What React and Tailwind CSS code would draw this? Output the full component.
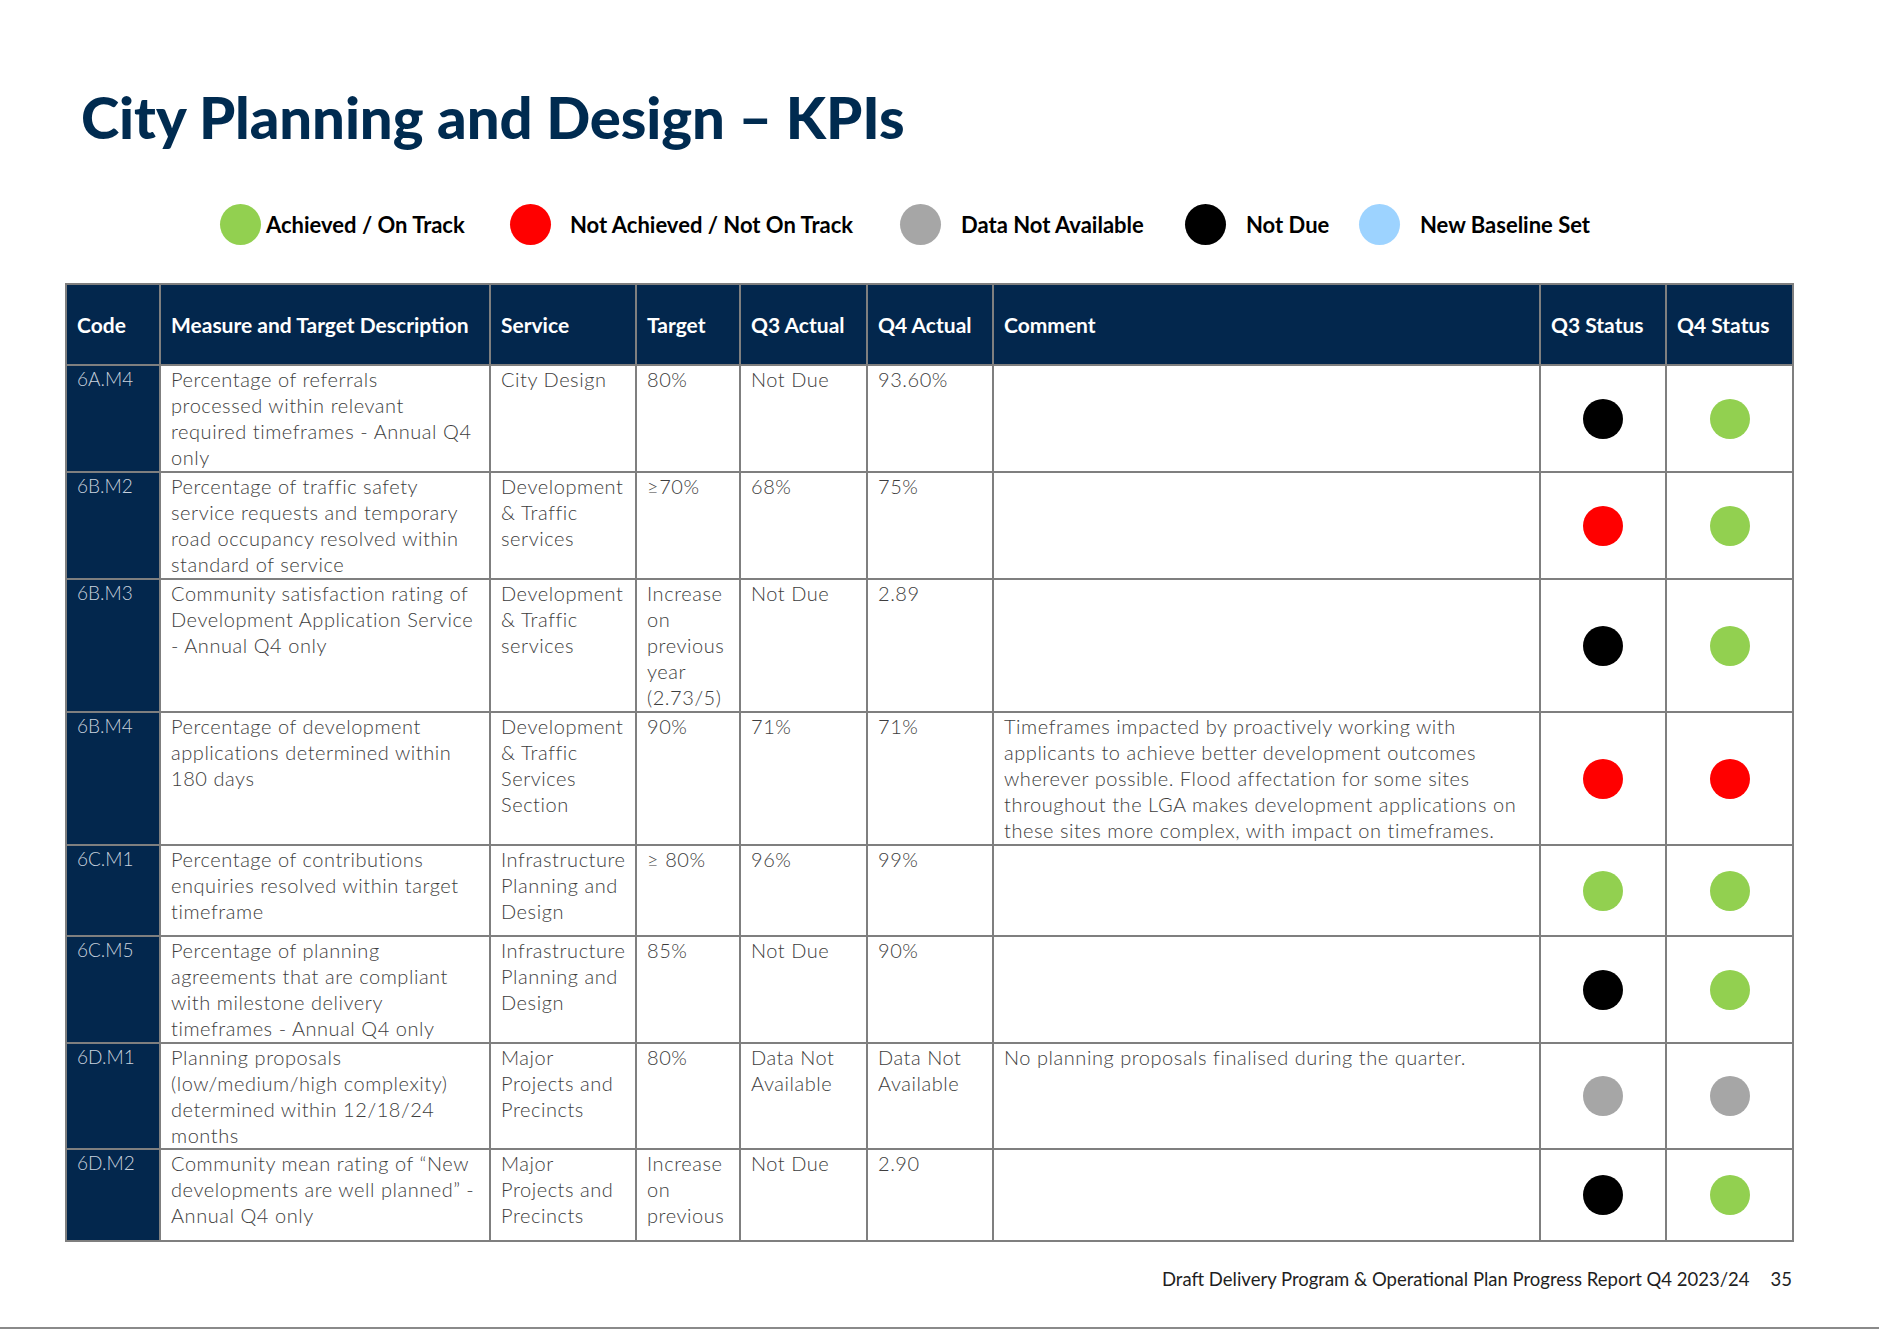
import React from 'react';

const STATUS = {
  green: 'bg-[#92d050]',
  red: 'bg-[#ff0000]',
  grey: 'bg-[#a6a6a6]',
  black: 'bg-black',
  blue: 'bg-[#9dd3ff]',
};

const LEGEND = [
  { color: 'green', label: 'Achieved / On Track', w: 'w-[290px]', gap: 'gap-[5px]' },
  { color: 'red', label: 'Not Achieved / Not On Track', w: 'w-[390px]', gap: 'gap-[19px]' },
  { color: 'grey', label: 'Data Not Available', w: 'w-[285px]', gap: 'gap-[20px]' },
  { color: 'black', label: 'Not Due', w: 'w-[174px]', gap: 'gap-[20px]' },
  { color: 'blue', label: 'New Baseline Set', w: 'w-auto', gap: 'gap-[20px]' },
];

const HEADERS = ['Code', 'Measure and Target Description', 'Service', 'Target', 'Q3 Actual', 'Q4 Actual', 'Comment', 'Q3 Status', 'Q4 Status'];
const WIDTHS = ['w-[94px]', 'w-[330px]', 'w-[146px]', 'w-[104px]', 'w-[127px]', 'w-[126px]', 'w-[547px]', 'w-[126px]', 'w-[127px]'];

// lines are kept as in the report so the wrapping matches
const ROWS = [
  {
    h: 'h-[107px]',
    code: '6A.M4',
    measure: ['Percentage of referrals', 'processed within relevant', 'required timeframes - Annual Q4', 'only'],
    service: ['City Design'],
    target: ['80%'],
    q3: ['Not Due'],
    q4: ['93.60%'],
    comment: [],
    s3: 'black',
    s4: 'green',
  },
  {
    h: 'h-[107px]',
    code: '6B.M2',
    measure: ['Percentage of traffic safety', 'service requests and temporary', 'road occupancy resolved within', 'standard of service'],
    service: ['Development', '& Traffic', 'services'],
    target: ['≥70%'],
    q3: ['68%'],
    q4: ['75%'],
    comment: [],
    s3: 'red',
    s4: 'green',
  },
  {
    h: 'h-[133px]',
    code: '6B.M3',
    measure: ['Community satisfaction rating of', 'Development Application Service', '- Annual Q4 only'],
    service: ['Development', '& Traffic', 'services'],
    target: ['Increase', 'on', 'previous', 'year', '(2.73/5)'],
    q3: ['Not Due'],
    q4: ['2.89'],
    comment: [],
    s3: 'black',
    s4: 'green',
  },
  {
    h: 'h-[133px]',
    code: '6B.M4',
    measure: ['Percentage of development', 'applications determined within', '180 days'],
    service: ['Development', '& Traffic', 'Services', 'Section'],
    target: ['90%'],
    q3: ['71%'],
    q4: ['71%'],
    comment: [
      'Timeframes impacted by proactively working with',
      'applicants to achieve better development outcomes',
      'wherever possible. Flood affectation for some sites',
      'throughout the LGA makes development applications on',
      'these sites more complex, with impact on timeframes.',
    ],
    s3: 'red',
    s4: 'red',
  },
  {
    h: 'h-[91px]',
    code: '6C.M1',
    measure: ['Percentage of contributions', 'enquiries resolved within target', 'timeframe'],
    service: ['Infrastructure', 'Planning and', 'Design'],
    target: ['≥ 80%'],
    q3: ['96%'],
    q4: ['99%'],
    comment: [],
    s3: 'green',
    s4: 'green',
  },
  {
    h: 'h-[107px]',
    code: '6C.M5',
    measure: ['Percentage of planning', 'agreements that are compliant', 'with milestone delivery', 'timeframes - Annual Q4 only'],
    service: ['Infrastructure', 'Planning and', 'Design'],
    target: ['85%'],
    q3: ['Not Due'],
    q4: ['90%'],
    comment: [],
    s3: 'black',
    s4: 'green',
  },
  {
    h: 'h-[106px]',
    code: '6D.M1',
    measure: ['Planning proposals', '(low/medium/high complexity)', 'determined within 12/18/24', 'months'],
    service: ['Major', 'Projects and', 'Precincts'],
    target: ['80%'],
    q3: ['Data Not', 'Available'],
    q4: ['Data Not', 'Available'],
    comment: ['No planning proposals finalised during the quarter.'],
    s3: 'grey',
    s4: 'grey',
  },
  {
    h: 'h-[92px]',
    code: '6D.M2',
    measure: ['Community mean rating of \u201cNew', 'developments are well planned\u201d -', 'Annual Q4 only'],
    service: ['Major', 'Projects and', 'Precincts'],
    target: ['Increase', 'on', 'previous'],
    q3: ['Not Due'],
    q4: ['2.90'],
    comment: [],
    s3: 'black',
    s4: 'green',
  },
];

function Dot({ color }) {
  return <span className={`block w-[40px] h-[40px] rounded-full ${STATUS[color]}`} />;
}

function Cell({ lines }) {
  return (
    <td className="border-2 border-[#7f7f7f] align-top pl-[10px] text-[#3d3d3d] text-[20px] tracking-[0.55px]">
      {lines.map((l, i) => (
        <div key={i} className="whitespace-nowrap">
          {l}
        </div>
      ))}
    </td>
  );
}

export default function App() {
  return (
    <div className="w-[1879px] h-[1329px] bg-white flex flex-col font-['Lato',sans-serif] overflow-hidden">
      {/* Title */}
      <h1 className="pl-[81px] pt-[88px] text-[58px] leading-[58px] font-black tracking-[-0.1px] text-[#002b50]">
        City Planning and Design – KPIs
      </h1>

      {/* Legend */}
      <div className="flex items-center pl-[220px] mt-[58px] h-[41px]">
        {LEGEND.map((item) => (
          <div key={item.label} className={`flex items-center ${item.w} ${item.gap}`}>
            <span className={`block w-[41px] h-[41px] rounded-full ${STATUS[item.color]}`} />
            <span className="text-[22px] font-bold text-black">{item.label}</span>
          </div>
        ))}
      </div>

      {/* Table */}
      <div className="pl-[65px] mt-[38px]">
        <table className="table-fixed border-collapse w-[1727px] text-[19px] leading-[26px] font-light">
          <colgroup>
            {WIDTHS.map((w, i) => (
              <col key={i} className={w} />
            ))}
          </colgroup>
          <thead>
            <tr className="h-[81px]">
              {HEADERS.map((h) => (
                <th
                  key={h}
                  className="border-2 border-[#7f7f7f] bg-[#03274d] text-white text-left align-middle pl-[10px] font-bold text-[21px] whitespace-nowrap"
                >
                  {h}
                </th>
              ))}
            </tr>
          </thead>
          <tbody>
            {ROWS.map((r) => (
              <tr key={r.code} className={r.h}>
                <td className="border-2 border-[#7f7f7f] bg-[#03274d] text-[#c9d2de] align-top pl-[10px]">
                  {r.code}
                </td>
                <Cell lines={r.measure} />
                <Cell lines={r.service} />
                <Cell lines={r.target} />
                <Cell lines={r.q3} />
                <Cell lines={r.q4} />
                <Cell lines={r.comment} />
                <td className="border-2 border-[#7f7f7f] align-middle">
                  <div className="flex justify-center">
                    <Dot color={r.s3} />
                  </div>
                </td>
                <td className="border-2 border-[#7f7f7f] align-middle">
                  <div className="flex justify-center">
                    <Dot color={r.s4} />
                  </div>
                </td>
              </tr>
            ))}
          </tbody>
        </table>
      </div>

      {/* Footer */}
      <div className="flex justify-end items-center gap-[21px] pr-[87px] mt-auto mb-[33px] text-[18.5px] text-[#1f1f1f]">
        <span>Draft Delivery Program &amp; Operational Plan Progress Report Q4 2023/24</span>
        <span>35</span>
      </div>
      <div className="h-[2px] bg-[#8a8a8a]" />
    </div>
  );
}
